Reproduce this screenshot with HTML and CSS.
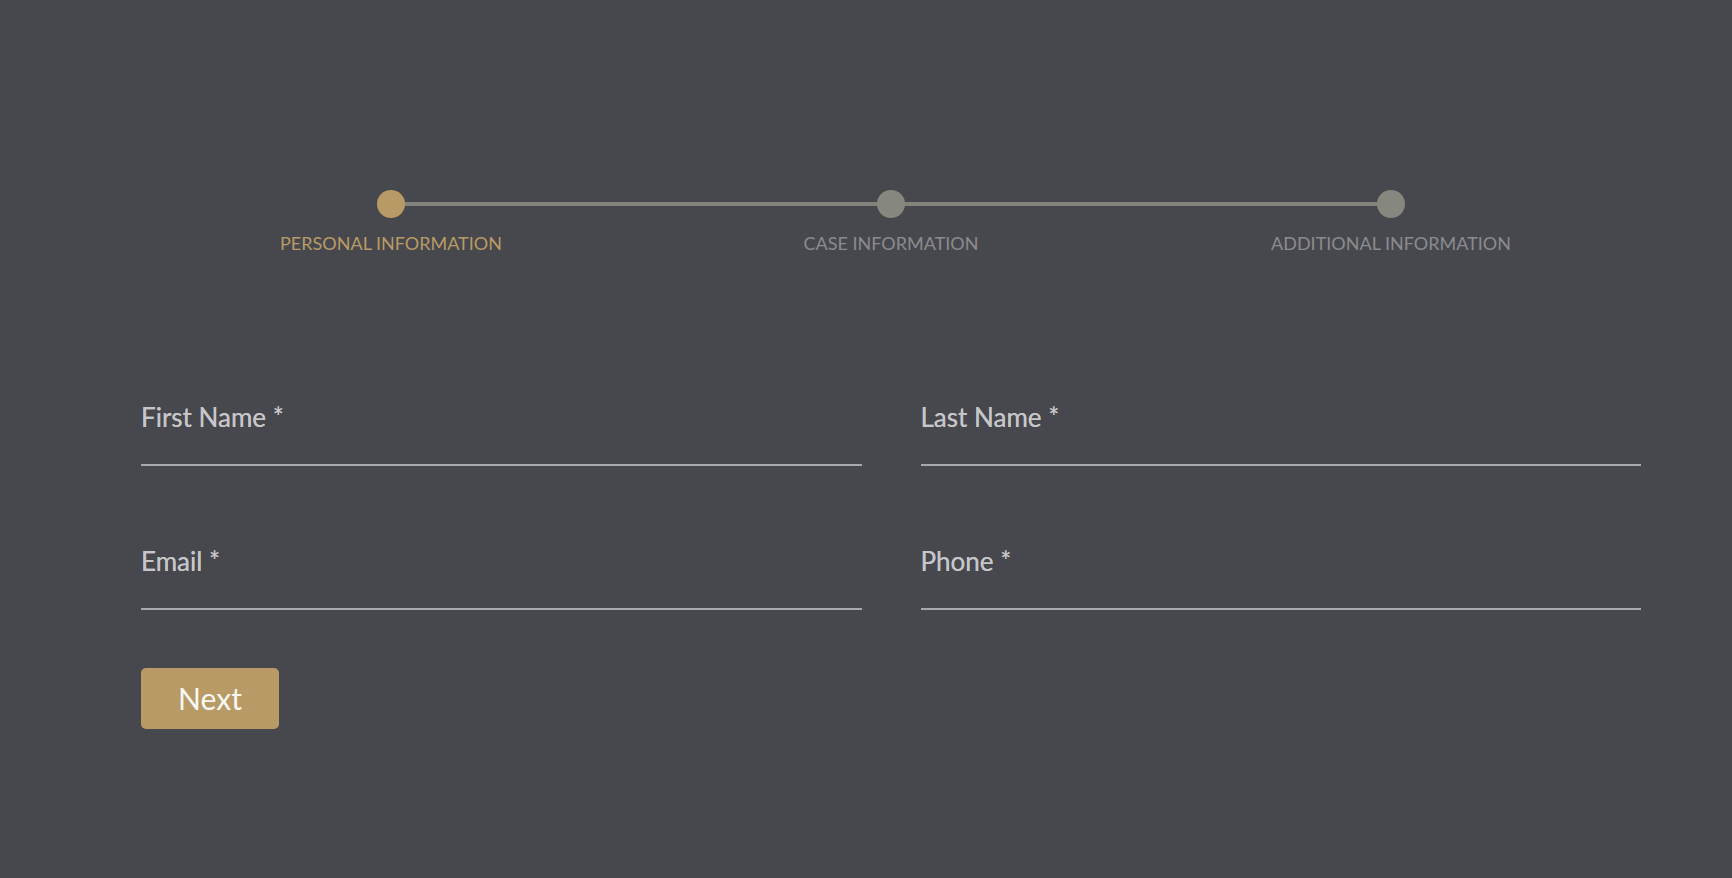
FILE: index.html
```
<!DOCTYPE html>
<html lang="en">
<head>
	<meta charset="UTF-8">
	<title>Contact form</title>
	<link rel="stylesheet" href="styles.css">
</head>
<body>
	<div class="wrap">
		<ul class="steps">
			<li class="step active"><span class="dot"></span><span class="name">PERSONAL INFORMATION</span></li>
			<li class="step"><span class="dot"></span><span class="name">CASE INFORMATION</span></li>
			<li class="step"><span class="dot"></span><span class="name">ADDITIONAL INFORMATION</span></li>
		</ul>

		<form class="form">
			<div class="row">
				<div class="field">
					<label for="first">First Name *</label>
					<input type="text" id="first">
				</div>
				<div class="field">
					<label for="last">Last Name *</label>
					<input type="text" id="last">
				</div>
			</div>
			<div class="row">
				<div class="field">
					<label for="email">Email *</label>
					<input type="text" id="email">
				</div>
				<div class="field">
					<label for="phone">Phone *</label>
					<input type="text" id="phone">
				</div>
			</div>
			<button type="button" class="next">Next</button>
		</form>
	</div>
</body>
</html>
```
FILE: styles.css
```
*{margin: 0; padding: 0; box-sizing: border-box;}
li{list-style: none;}
body{
	background: #47484d;
	font-family: Lato, "Liberation Sans", sans-serif;
	height: 878px;
	overflow: hidden;
}
.wrap{
	width: 1500px;
	margin-left: 141px;
	padding-top: 190px;
}
.steps{
	display: grid;
	grid-template-columns: repeat(3, 1fr);
	position: relative;
}
.steps:before{
	content: "";
	position: absolute;
	top: 12px;
	left: 250px;
	right: 250px;
	height: 4px;
	background: #82837a;
}
.step{
	display: flex;
	flex-direction: column;
	align-items: center;
	position: relative;
}
.dot{
	width: 28px;
	height: 28px;
	border-radius: 50%;
	background: #86877f;
}
.name{
	margin-top: 15px;
	font-size: 18px;
	line-height: 1.2;
	color: #8a8b8f;
}
.active .dot{background: #b89a66;}
.active .name{color: #b89a66;}

.form{
	margin-top: 147px;
}
.row{
	display: grid;
	grid-template-columns: 1fr 1fr;
	gap: 59px;
	margin-bottom: 80px;
}
.row + .row{margin-bottom: 58px;}
.field{
	display: flex;
	flex-direction: column;
}
.field label{
	font-size: 26px;
	line-height: 1.2;
	color: #c6c6c9;
	text-shadow: 0 0 0.4px #c6c6c9;
}
.field input{
	height: 33px;
	border: none;
	border-bottom: 2px solid #a9a9ac;
	background: transparent;
	outline: none;
	font: 22px Lato, sans-serif;
	color: #ddd;
}
.next{
	width: 138px;
	height: 61px;
	border: none;
	border-radius: 5px;
	background: #b89a66;
	color: #fbf8f2;
	font: 30px Lato, "Liberation Sans", sans-serif;
	cursor: pointer;
}
```
